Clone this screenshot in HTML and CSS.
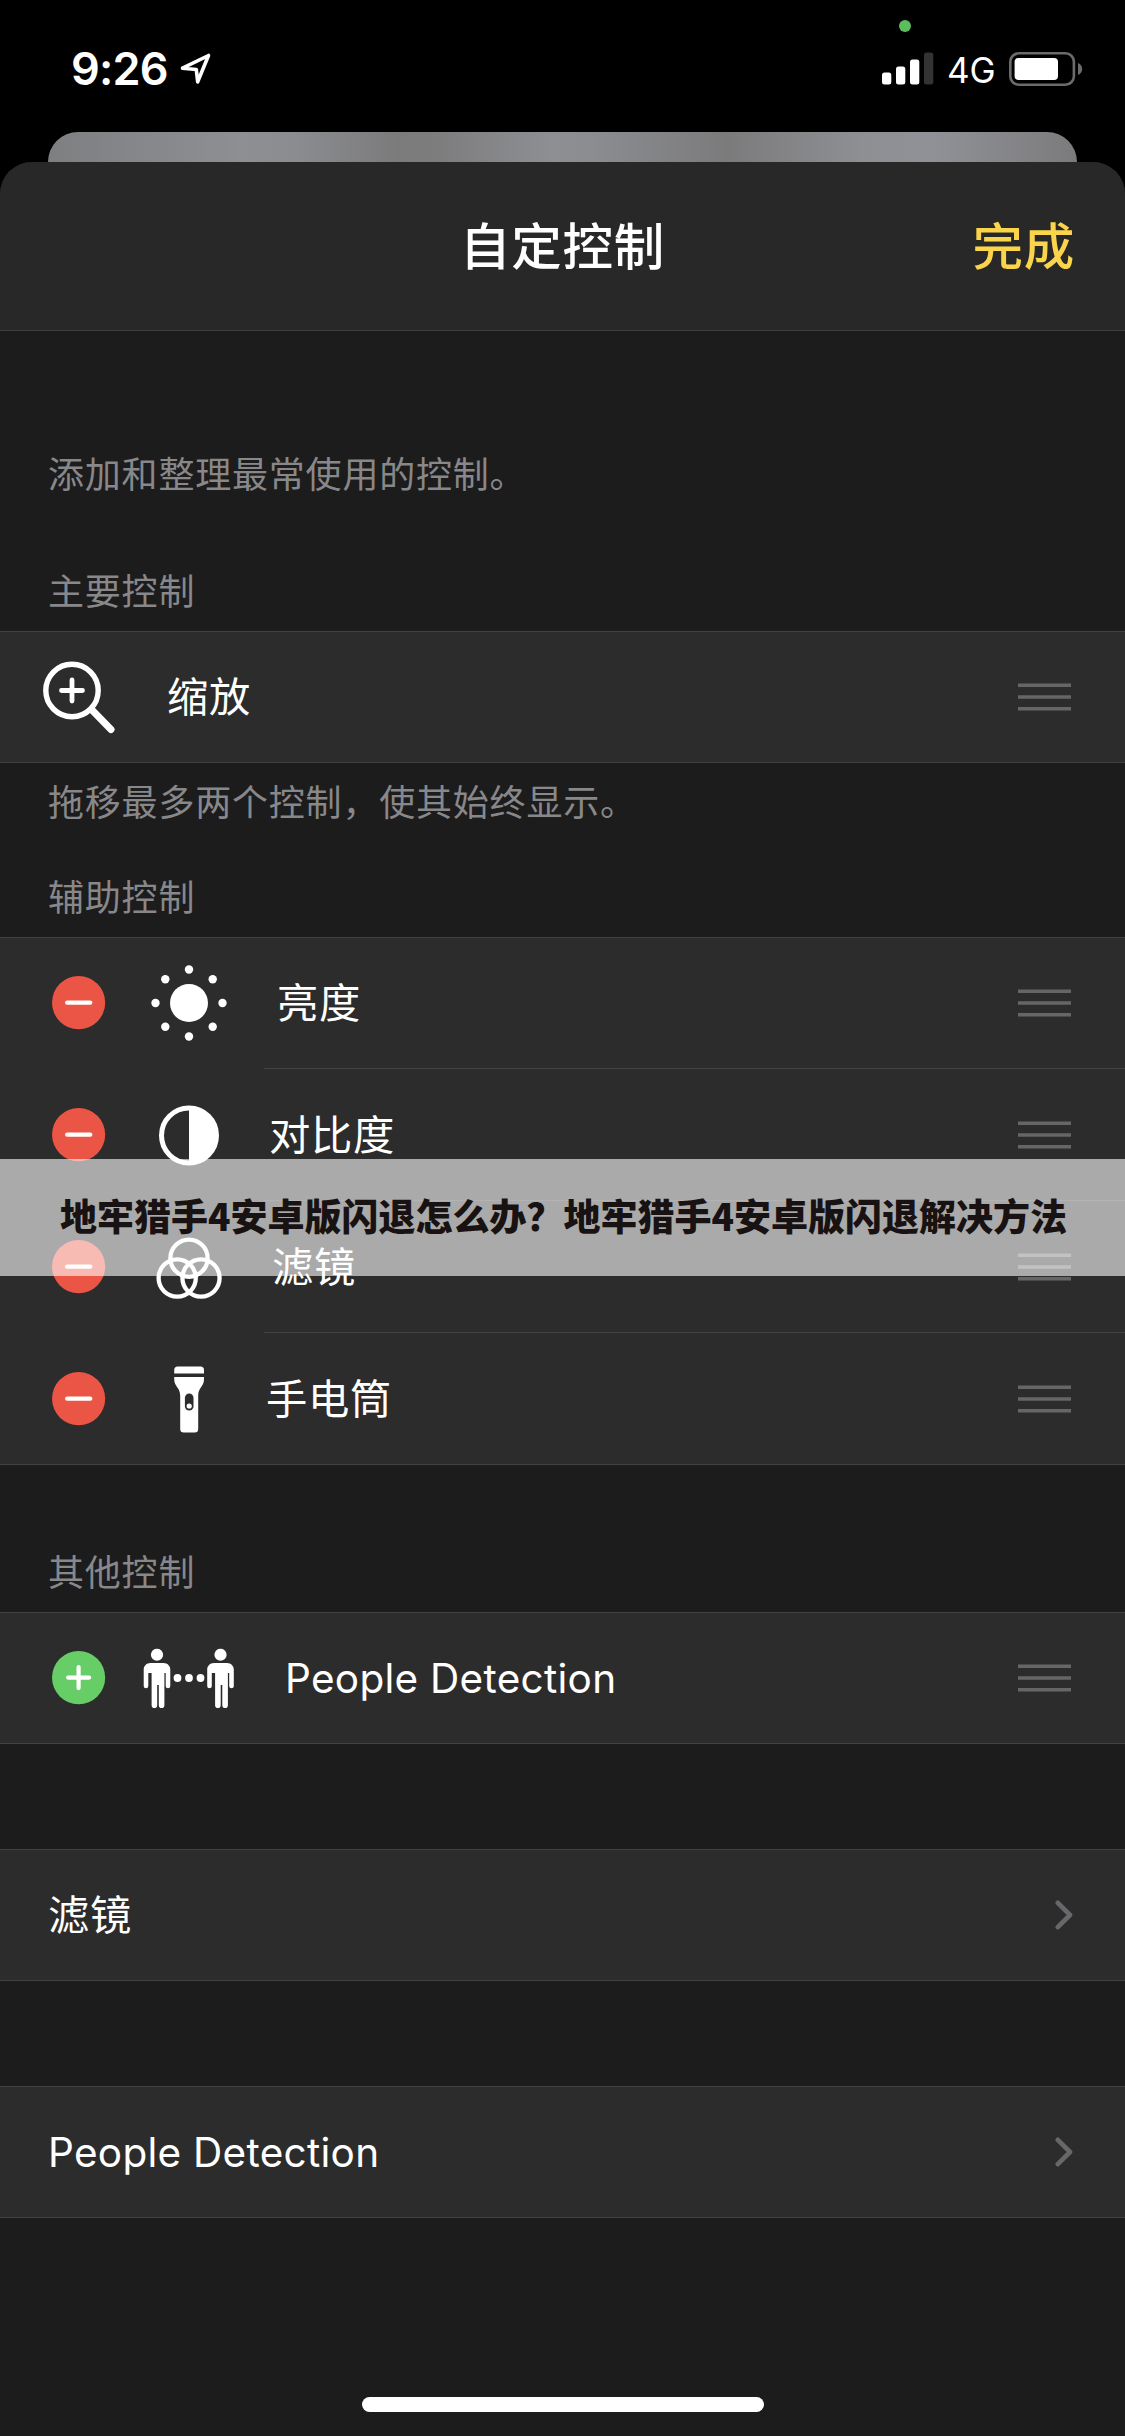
FILE: index.html
```html
<!DOCTYPE html>
<html lang="zh-CN">
<head>
<meta charset="utf-8">
<title>自定控制</title>
<link rel="stylesheet" href="styles.css">
</head>
<body>
<svg class="defs" width="0" height="0" aria-hidden="true">
  <symbol id="handle" viewBox="0 0 53 28"><path d="M0 2.2h53M0 14h53M0 25.8h53" stroke="#666668" stroke-width="3.4"/></symbol>
  <symbol id="minus" viewBox="0 0 54 54"><circle cx="26.600" cy="26.600" r="26.600" fill="#eb5545"/><path d="M15.200 26.600h23" stroke="#fff" stroke-width="4.400" stroke-linecap="round"/></symbol>
  <symbol id="plus" viewBox="0 0 54 54"><circle cx="26.600" cy="26.600" r="26.600" fill="#67ce67"/><path d="M16.100 26.600h21M26.600 16.100v21" stroke="#fff" stroke-width="4.200" stroke-linecap="round"/></symbol>
  <symbol id="chevron" viewBox="0 0 18 30"><path d="M2.800 2.800L15 15L2.800 27.200" fill="none" stroke="#68686b" stroke-width="4.600" stroke-linecap="round" stroke-linejoin="round"/></symbol>
  <symbol id="person" viewBox="0 0 28 60"><circle cx="14" cy="6.200" r="6.100"/><path d="M7.500 14.500h13c4 0 6.800 2.800 6.800 6.800v16.200a2.300 2.300 0 0 1-4.600 0V24.500h-1.300v32.300a2.700 2.700 0 0 1-5.600 0V36.500h-1.600v20.300a2.700 2.700 0 0 1-5.600 0V24.500H5.300v13a2.300 2.300 0 0 1-4.600 0V21.300c0-4 2.800-6.800 6.800-6.800z"/></symbol>
</svg>
<div class="screen">
  <header class="status">
    <div class="status-left">
      <span class="time">9:26</span>
      <svg class="location" viewBox="0 0 32 32"><path d="M2.500 15.200L28.500 2.500L17.700 28.800L16.300 16.500z" fill="none" stroke="#fff" stroke-width="3.600" stroke-linejoin="round"/></svg>
    </div>
    <div class="status-right">
      <svg class="signal" viewBox="0 0 52 34"><g fill="#fff"><rect x="0" y="20.500" width="9.300" height="12" rx="2.500"/><rect x="14" y="14.500" width="9.300" height="18" rx="2.500"/><rect x="28" y="7.500" width="9.300" height="25" rx="2.500"/></g><rect x="42" y="0.500" width="9.300" height="32" rx="2.500" fill="#333"/></svg>
      <span class="network">4G</span>
      <svg class="battery" viewBox="0 0 74 34"><rect x="1.300" y="1.300" width="63.600" height="31.400" rx="8.500" fill="none" stroke="#6b6b6b" stroke-width="2.600"/><rect x="5.600" y="6" width="43.400" height="22" rx="4" fill="#fff"/><path d="M69 11c2.700 1 4.200 3.400 4.200 6s-1.500 5-4.200 6z" fill="#6b6b6b"/></svg>
    </div>
    <i class="camera-dot"></i>
  </header>
  <div class="back-card"></div>
  <main class="sheet">
    <nav class="navbar">
      <span></span>
      <h1 class="title">自定控制</h1>
      <a class="done">完成</a>
    </nav>
    <p class="note intro">添加和整理最常使用的控制。</p>
    <h2 class="note main-label">主要控制</h2>
    <section class="group">
      <div class="row primary">
        <svg class="magnifier" viewBox="0 0 74 74"><g fill="none" stroke="#fff" stroke-linecap="round"><circle cx="30" cy="30.500" r="26.200" stroke-width="5.400"/><path d="M30 20v21M19.500 30.500h21" stroke-width="4.800"/><path d="M50.500 50.500L69 69.500" stroke-width="7"/></g></svg>
        <span class="label">缩放</span>
        <svg class="handle"><use href="#handle"/></svg>
      </div>
    </section>
    <p class="note footer">拖移最多两个控制，使其始终显示。</p>
    <h2 class="note aux-label">辅助控制</h2>
    <section class="group">
      <div class="row item first">
        <svg class="toggle"><use href="#minus"/></svg>
        <svg class="glyph" viewBox="0 0 96 80"><g fill="#fff"><circle cx="48" cy="40" r="19"/><circle cx="48" cy="6.500" r="4.200"/><circle cx="48" cy="73.500" r="4.200"/><circle cx="14.500" cy="40" r="4.200"/><circle cx="81.500" cy="40" r="4.200"/><circle cx="24.300" cy="16.300" r="4.200"/><circle cx="71.700" cy="16.300" r="4.200"/><circle cx="24.300" cy="63.700" r="4.200"/><circle cx="71.700" cy="63.700" r="4.200"/></g></svg>
        <span class="label brightness">亮度</span>
        <svg class="handle"><use href="#handle"/></svg>
      </div>
      <div class="row item">
        <svg class="toggle"><use href="#minus"/></svg>
        <svg class="glyph" viewBox="0 0 96 80"><circle cx="48" cy="40.500" r="27.500" fill="none" stroke="#fff" stroke-width="5"/><path d="M48 13a27.500 27.500 0 0 1 0 55z" fill="#fff"/></svg>
        <span class="label contrast">对比度</span>
        <svg class="handle"><use href="#handle"/></svg>
      </div>
      <div class="row item">
        <svg class="toggle"><use href="#minus"/></svg>
        <svg class="glyph" viewBox="0 0 96 80"><g fill="none" stroke="#fff" stroke-width="4.300"><circle cx="48" cy="31.200" r="18.600"/><circle cx="36.200" cy="51" r="18.600"/><circle cx="60" cy="51" r="18.600"/></g></svg>
        <span class="label filters">滤镜</span>
        <svg class="handle"><use href="#handle"/></svg>
      </div>
      <div class="row item">
        <svg class="toggle"><use href="#minus"/></svg>
        <svg class="glyph" viewBox="0 0 96 80"><path d="M33.200 14.500v-3.500a3.500 3.500 0 0 1 3.500-3.500h22.800a3.500 3.500 0 0 1 3.500 3.500v3.500z" fill="#fff"/><path d="M33.200 18h29.800v2c0 8-5.800 8-5.800 17v33a3.500 3.500 0 0 1-3.500 3.500H42.700a3.500 3.500 0 0 1-3.500-3.500V37c0-9-6-9-6-17z" fill="#fff"/><rect x="43.900" y="34.500" width="8.600" height="17" rx="4.300" fill="#2c2c2c"/><circle cx="48.200" cy="47" r="2.600" fill="#fff"/></svg>
        <span class="label torch">手电筒</span>
        <svg class="handle"><use href="#handle"/></svg>
      </div>
    </section>
    <h2 class="note other-label">其他控制</h2>
    <section class="group">
      <div class="row item">
        <svg class="toggle"><use href="#plus"/></svg>
        <svg class="glyph" viewBox="0 0 96 80" fill="#fff"><use href="#person" x="2" y="10.500" width="28" height="60"/><use href="#person" x="65.500" y="10.500" width="28" height="60"/><circle cx="36.500" cy="40" r="3.900"/><circle cx="48" cy="40" r="3.900"/><circle cx="59.500" cy="40" r="3.900"/></svg>
        <span class="label people latin">People Detection</span>
        <svg class="handle"><use href="#handle"/></svg>
      </div>
    </section>
    <section class="group linked">
      <div class="row link"><span class="label">滤镜</span><svg class="chevron"><use href="#chevron"/></svg></div>
    </section>
    <section class="group linked">
      <div class="row link"><span class="label latin">People Detection</span><svg class="chevron"><use href="#chevron"/></svg></div>
    </section>
    <div class="home-indicator"></div>
  </main>
  <div class="banner">地牢猎手4安卓版闪退怎么办？地牢猎手4安卓版闪退解决方法</div>
</div>
</body>
</html>
```
FILE: styles.css
```css
* { box-sizing: border-box; }
body { margin: 0; background: #000; }
h1, h2, p { margin: 0; font-weight: 400; }
svg { display: block; flex: none; }
.defs { position: absolute; }

.screen {
  position: relative;
  width: 1125px;
  height: 2436px;
  display: flex;
  flex-direction: column;
  overflow: hidden;
  color: #fff;
  font-family: Inter, "Noto Sans CJK SC", sans-serif;
}

.status {
  position: relative;
  height: 132px;
  flex: none;
  display: flex;
  justify-content: space-between;
  padding: 41px 42px 0 71px;
}
.status-left, .status-right { display: flex; align-items: center; height: 56px; }
.time { width: 100px; font-size: 45px; font-weight: 600; line-height: 56px; letter-spacing: -0.8px; white-space: nowrap; }
.location { width: 32px; height: 32px; margin-left: 9px; }
.signal { width: 52px; height: 34px; }
.network { width: 49px; margin: 2px 13px 0 13px; font-size: 35px; line-height: 48px; }
.battery { width: 74px; height: 34px; }
.camera-dot {
  position: absolute;
  left: 899px;
  top: 20px;
  width: 12px;
  height: 12px;
  border-radius: 50%;
  background: #5cbd5e;
}

.back-card {
  flex: none;
  height: 30px;
  margin: 0 48px;
  border-radius: 30px 30px 0 0;
  background: linear-gradient(90deg, #7e7f81 0, #8e8f93 19%, #8b8c90 24%, #7b7b7c 34%, #7d7d7e 38%, #8e8f93 49%, #8b8c90 53%, #7b7b7c 66%, #8e8f93 79%, #909196 86%, #7b7b7d 100%);
}

.sheet {
  flex: 1;
  display: flex;
  flex-direction: column;
  background: #1c1c1c;
  border-radius: 32px 32px 0 0;
  overflow: hidden;
}
.navbar {
  flex: none;
  height: 169px;
  display: grid;
  grid-template-columns: 1fr auto 1fr;
  align-items: center;
  padding: 2px 50px 0;
  background: #282828;
  border-bottom: 1px solid #3f3f3f;
}
.title, .done { font-size: 50.500px; font-weight: 500; line-height: 70px; letter-spacing: 0.7px; }
.done { justify-self: end; color: #fad54b; }

.note {
  flex: none;
  padding-left: 48px;
  height: 48px;
  line-height: 48px;
  font-size: 36px;
  letter-spacing: 0.8px;
  color: #88888b;
}
.intro { margin-top: 120px; }
.main-label { margin-top: 69px; margin-bottom: 15px; }
.footer { margin-top: 16px; }
.aux-label { margin-top: 47px; margin-bottom: 15px; }
.other-label { margin-top: 84px; margin-bottom: 15px; }

.group { flex: none; background: #2c2c2c; border-top: 1px solid #424242; }
.row {
  display: flex;
  align-items: center;
  height: 132px;
  padding-right: 54px;
  border-bottom: 1px solid #424242;
}
.row:first-child { height: 131px; }
.item { padding-left: 52px; }
.item:not(:last-child) {
  border-bottom: 0;
  background: linear-gradient(#424242, #424242) 264px 100% / 861px 1px no-repeat;
}
.first { padding-bottom: 1px; }
.label { font-size: 41.300px; line-height: 60px; letter-spacing: 0.7px; white-space: nowrap; }
.latin { font-size: 40.500px; letter-spacing: 0.28px; padding-top: 1px; }
.magnifier { width: 74px; height: 74px; margin-left: 42px; margin-right: 51px; }
.toggle { width: 54px; height: 54px; }
.glyph { width: 96px; height: 80px; margin-left: 35px; }
.brightness { margin-left: 40px; }
.contrast { margin-left: 32px; }
.filters { margin-left: 35px; }
.torch { margin-left: 29px; }
.people { margin-left: 48px; }
.handle { width: 53px; height: 28px; margin-left: auto; }
.linked { margin-top: 105px; }
.link { padding-left: 48px; padding-right: 52px; }
.chevron { width: 18px; height: 30px; margin-left: auto; }

.home-indicator {
  width: 402px;
  height: 15px;
  margin: auto auto 24px;
  border-radius: 8px;
  background: #fff;
}

.banner {
  position: absolute;
  left: 0;
  right: 0;
  top: 1159px;
  height: 117px;
  display: flex;
  align-items: center;
  justify-content: center;
  padding: 0 0 6px 2px;
  background: rgba(255, 255, 255, 0.6);
  color: #191213;
  font-family: "Noto Sans CJK SC", sans-serif;
  font-size: 37px;
  font-weight: 900;
  line-height: 56px;
  white-space: nowrap;
}
```
